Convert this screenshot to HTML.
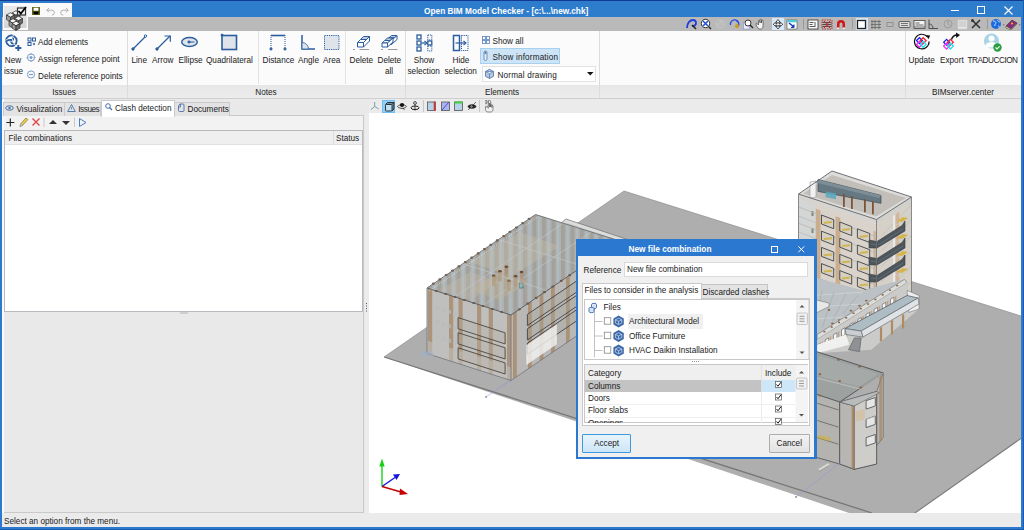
<!DOCTYPE html>
<html><head><meta charset="utf-8">
<style>
*{box-sizing:border-box;margin:0;padding:0}
html,body{width:1024px;height:530px;overflow:hidden}
body{position:relative;background:#2c7ad0;font-family:"Liberation Sans",sans-serif;font-size:8.2px;color:#1a1a1a}
.a{position:absolute}
.t{position:absolute;white-space:nowrap;line-height:13px}
.c{text-align:center}
svg{position:absolute;overflow:visible}
</style></head><body>
<!-- desktop strip -->
<div class="a" style="left:0;top:0;width:1024px;height:1.3px;background:#123a94"></div>
<!-- title bar -->
<div class="a" style="left:0;top:1.3px;width:1024px;height:16px;background:#2e7dcd"></div>
<div class="a" style="left:1023px;top:0;width:1px;height:530px;background:#1a5cae"></div>
<div class="a" style="left:0;top:529px;width:1024px;height:1px;background:#1a5cae"></div>
<div class="t" style="left:424px;top:4.8px;color:#fff;font-weight:bold;font-size:8.3px">Open BIM Model Checker - [c:\...\new.chk]</div>
<!-- window controls -->
<div class="a" style="left:951px;top:10px;width:8px;height:1px;background:#fff"></div>
<div class="a" style="left:977px;top:6px;width:8px;height:8px;border:1px solid #fff"></div>
<svg style="left:1004px;top:6px" width="9" height="9"><path d="M0.5 0.5L8.5 8.5M8.5 0.5L0.5 8.5" stroke="#fff" stroke-width="1.1"/></svg>
<!-- QAT -->
<div class="a" style="left:2px;top:17.2px;width:1019px;height:13.8px;background:#b9b9b9"></div>
<div class="a" style="left:3px;top:3px;width:25px;height:27px;background:#fafafa"></div>
<div class="a" style="left:4px;top:6px;width:22px;height:22px;background:#dcdcdc"></div>
<div class="a" style="left:28px;top:3px;width:44px;height:14px;background:#f9f9f9"></div>
<svg style="left:4px;top:6px" width="23" height="23">
<defs><linearGradient id="ab" x1="0" y1="0" x2="0" y2="1"><stop offset="0" stop-color="#ececec"/><stop offset="1" stop-color="#d2d2d2"/></linearGradient></defs>
<rect x="0.3" y="0.3" width="22.3" height="21.5" fill="url(#ab)"/>
<g stroke="#2a2a2a" stroke-width="0.7" stroke-linejoin="round"><path d="M12.00 4.70L15.98 7.00L12.00 9.30L8.02 7.00Z" fill="#f4f4f4"/><path d="M8.02 7.00L12.00 9.30L12.00 13.90L8.02 11.60Z" fill="#9c9c9c"/><path d="M15.98 7.00L12.00 9.30L12.00 13.90L15.98 11.60Z" fill="#6c6c6c"/><path d="M6.50 6.70L10.48 9.00L6.50 11.30L2.52 9.00Z" fill="#f4f4f4"/><path d="M2.52 9.00L6.50 11.30L6.50 15.90L2.52 13.60Z" fill="#9c9c9c"/><path d="M10.48 9.00L6.50 11.30L6.50 15.90L10.48 13.60Z" fill="#6c6c6c"/><path d="M14.50 10.20L18.48 12.50L14.50 14.80L10.52 12.50Z" fill="#f4f4f4"/><path d="M10.52 12.50L14.50 14.80L14.50 19.40L10.52 17.10Z" fill="#9c9c9c"/><path d="M18.48 12.50L14.50 14.80L14.50 19.40L18.48 17.10Z" fill="#6c6c6c"/><path d="M9.00 12.70L12.98 15.00L9.00 17.30L5.02 15.00Z" fill="#f4f4f4"/><path d="M5.02 15.00L9.00 17.30L9.00 21.90L5.02 19.60Z" fill="#9c9c9c"/><path d="M12.98 15.00L9.00 17.30L9.00 21.90L12.98 19.60Z" fill="#6c6c6c"/><path d="M12.00 15.20L15.98 17.50L12.00 19.80L8.02 17.50Z" fill="#f4f4f4"/><path d="M8.02 17.50L12.00 19.80L12.00 24.40L8.02 22.10Z" fill="#9c9c9c"/><path d="M15.98 17.50L12.00 19.80L12.00 24.40L15.98 22.10Z" fill="#6c6c6c"/></g>
<rect x="13.5" y="2" width="8" height="7" fill="#f3f3f3" stroke="#333" stroke-width="1.2"/>
<path d="M14.5 5l2.3 2.5L22 1" stroke="#000" stroke-width="1.8" fill="none"/>
</svg>
<svg style="left:32px;top:6.5px" width="8" height="8"><rect x="0" y="0" width="8" height="8" fill="#3b3b10"/><rect x="1.5" y="0.5" width="5" height="3.3" fill="#fff"/><rect x="2" y="5" width="4" height="3" fill="#000"/><rect x="0.3" y="0.3" width="7.4" height="7.4" fill="none" stroke="#7a7a20" stroke-width="0.6"/></svg>
<svg style="left:46px;top:6.5px" width="9" height="8"><path d="M0.8 3.2h5a2.5 2.5 0 0 1 0 5" fill="none" stroke="#b0b0b0" stroke-width="1"/><path d="M3 1L0.8 3.2 3 5.4" fill="none" stroke="#b0b0b0" stroke-width="1"/></svg>
<svg style="left:60px;top:6.5px" width="9" height="8"><path d="M8.2 3.2h-5a2.5 2.5 0 0 0 0 5" fill="none" stroke="#b0b0b0" stroke-width="1"/><path d="M6 1L8.2 3.2 6 5.4" fill="none" stroke="#b0b0b0" stroke-width="1"/></svg>


<!-- top toolbar icons -->
<div class="a" style="left:772px;top:18px;width:12px;height:12px;background:#d6e8f7"></div>
<div class="a" style="left:856px;top:18px;width:12px;height:12px;background:#d6e8f7"></div>
<div class="a" style="left:803px;top:19px;width:1px;height:10px;background:#999"></div>
<div class="a" style="left:852px;top:19px;width:1px;height:10px;background:#999"></div>
<div class="a" style="left:987px;top:19px;width:1px;height:10px;background:#999"></div>
<svg style="left:685px;top:18px" width="340" height="12">
<!-- 691 zoom window -->
<path d="M2 10c0-5 3-8 6-8 2 0 3 1 3 3 0 2-2 3-4 3" fill="none" stroke="#1f3fd8" stroke-width="1.8"/><path d="M7 7l4 4" stroke="#222" stroke-width="1.4"/>
<!-- 706 zoom extents -->
<circle cx="20.5" cy="5.5" r="4.2" fill="#fff" stroke="#222" stroke-width="0.9"/><path d="M18 3l5 5M23 3l-5 5" stroke="#1f50e0" stroke-width="1.6"/><path d="M23.5 8.5l2.5 2.5" stroke="#222" stroke-width="1.3"/>
<!-- 721 grey -->
<circle cx="35.5" cy="6" r="4.2" fill="none" stroke="#c8c8c8" stroke-width="1"/><path d="M33 8l3-5 1 5" stroke="#c8c8c8" fill="none"/>
<!-- 735 rotate -->
<path d="M45.5 7a4.2 4.2 0 1 1 7.5 1.5" fill="none" stroke="#1f50e0" stroke-width="1.4"/><circle cx="52" cy="8" r="2" fill="#c8a020"/><path d="M51 2l2.5 1-1.5 2" fill="#1f50e0"/>
<!-- 749 zoom -->
<rect x="58.5" y="4" width="6" height="7" fill="#e8eeff" stroke="#8090d0" stroke-width="0.6"/><circle cx="63" cy="5" r="3" fill="#fff" stroke="#222" stroke-width="0.9"/><path d="M65 7l3 3" stroke="#222" stroke-width="1.3"/>
<!-- 763 hand -->
<path d="M74 11c-2-2-3-4-3-5 0-1 1-1 1.5 0l1 1V3c0-1 1.5-1 1.5 0v2V2c0-1 1.5-1 1.5 0v3V3c0-1 1.5-1 1.5 0v5c0 2-1 3-2 3z" fill="#f4f4f4" stroke="#333" stroke-width="0.6"/>
<!-- 778 pan arrows -->
<path d="M93 1.5l2 2.5h-1.2v1.5h1.5V4.3L97.8 6.3 95.3 8.3V7h-1.5v1.5H95l-2 2.5-2-2.5h1.2V7h-1.5v1.3L88.2 6.3l2.5-2V5.5h1.5V4H91z" fill="#fff" stroke="#222" stroke-width="0.8"/>
<!-- 792 -->
<rect x="102" y="2" width="10" height="9" fill="#fff" stroke="#555" stroke-width="0.6"/><rect x="102" y="2" width="10" height="2.3" fill="#4fc8d8"/><path d="M104 5l5 4" stroke="#1040c0" stroke-width="1.6"/><path d="M109 6.5v3h-3" fill="#1040c0" stroke="#1040c0"/>
<!-- 813 -->
<rect x="123" y="2" width="10" height="9" fill="#f8f8f8" stroke="#333" stroke-width="0.8"/><path d="M124.5 4.5h4M124.5 6.5h3M124.5 8.5h6M130 4v4" stroke="#333" stroke-width="0.8"/>
<!-- 827 red dashed -->
<rect x="137" y="2" width="10" height="9" fill="none" stroke="#c02020" stroke-width="0.9" stroke-dasharray="1.5 1"/><path d="M137.5 4.5h9M137.5 6.5h9M137.5 8.5h9" stroke="#333" stroke-width="0.8"/><path d="M139 3l6 7M145 3l-6 7" stroke="#d02020" stroke-width="1"/>
<!-- 841 magnet -->
<path d="M152 11V6a4 4 0 0 1 8 0v5h-2.5V6a1.5 1.5 0 0 0-3 0v5z" fill="#d01818"/><rect x="152" y="9.5" width="2.5" height="1.5" fill="#eee"/><rect x="157.5" y="9.5" width="2.5" height="1.5" fill="#eee"/>
<!-- 862 square -->
<rect x="172.5" y="2.5" width="8" height="8" fill="#fff" stroke="#222" stroke-width="1.3"/>
<!-- 876 grid -->
<path d="M187 2v9M190 2v9M194 2v9M186 3.5h10M186 6.5h10M186 9.5h10" stroke="#666" stroke-width="0.8"/>
<!-- 890 dotted -->
<rect x="202" y="4.5" width="6" height="4" fill="none" stroke="#888" stroke-width="0.8"/><path d="M201 2h1M208 2h1M201 11h1M208 11h1" stroke="#aaa"/>
<!-- 904.7 -->
<rect x="214" y="3.5" width="11" height="6" rx="1" fill="#ddd" stroke="#444" stroke-width="0.8"/><path d="M216 5.5h7M216 7.5h7" stroke="#444" stroke-width="0.7"/>
<!-- 919 -->
<rect x="229" y="2.5" width="11" height="8" fill="#f4f4f4" stroke="#444" stroke-width="0.8"/><path d="M230.5 5h4M230.5 7h8M229 9h11" stroke="#444" stroke-width="0.8"/>
<!-- 933 angle -->
<path d="M244 1.5v9h9M244 6a4 4 0 0 1 4 4.5" fill="none" stroke="#444" stroke-width="0.9"/>
<!-- 948 circle -->
<circle cx="263" cy="6" r="4" fill="none" stroke="#999" stroke-width="0.9"/><path d="M263 2.5v3.5l2 2" stroke="#999" fill="none"/>
<!-- 962 -->
<rect x="273" y="2" width="9" height="9" fill="#e8e8e8" stroke="#ccc" stroke-width="0.8"/><path d="M274 4h7M274 6h7M274 8h7" stroke="#bbb"/>
<!-- 977 tools -->
<path d="M287 2l8 8M295 2l-8 8" stroke="#333" stroke-width="1.6"/><circle cx="287.5" cy="2.5" r="1.5" fill="#333"/>
<!-- 996 globe -->
<circle cx="311" cy="6" r="5" fill="#1d6be0"/><path d="M308 3c2 0 3 1 3 2s-2 1-1 3M312 2c1 1 2 2 3 2M313 8c1 0 2 1 1 2" stroke="#c8e6ff" stroke-width="1" fill="none"/><path d="M318 6.5l1.5 0-0.75 1z" fill="#333"/>
<!-- 1011 book -->
<path d="M321 8l6-6 5 3-6 6z" fill="#8a2a80" stroke="#333" stroke-width="0.6"/><path d="M321 8v2l5 2 6-6v-1l-6 6z" fill="#f0e0b0" stroke="#333" stroke-width="0.5"/><circle cx="327" cy="5.5" r="1" fill="#ffc000"/><path d="M334 6.5l1.5 0-0.75 1z" fill="#333"/>
</svg>

<!-- ribbon -->
<div class="a" style="left:2px;top:31px;width:1019px;height:67px;background:#fbfbfb"></div>
<div class="a" style="left:2px;top:84.5px;width:1019px;height:13.5px;background:linear-gradient(#e7e7e7,#ececec)"></div>
<div class="a" style="left:2px;top:97.8px;width:1019px;height:1px;background:#cfcfcf"></div>
<div class="a" style="left:127px;top:31px;width:1px;height:67px;background:#dcdcdc"></div>
<div class="a" style="left:258px;top:31px;width:1px;height:53px;background:#e3e3e3"></div>
<div class="a" style="left:345px;top:31px;width:1px;height:53px;background:#e3e3e3"></div>
<div class="a" style="left:405px;top:31px;width:1px;height:67px;background:#dcdcdc"></div>
<div class="a" style="left:599px;top:31px;width:1px;height:67px;background:#dcdcdc"></div>
<div class="a" style="left:905px;top:31px;width:1px;height:67px;background:#dcdcdc"></div>


<div class="a" style="left:479.5px;top:48px;width:80px;height:15.5px;background:#cde4f7;border:1px solid #a8d0f0"></div>
<div class="a" style="left:481.5px;top:66px;width:114px;height:16px;background:#fff;border:1px solid #e2e2e2"></div>
<!-- ribbon icons -->
<svg style="left:0;top:0" width="1024" height="100">
<g fill="none" stroke="#2a5d9f">
<!-- new issue -->
<path d="M6.10 40.80A5.3 5.3 0 0 1 13.64 36.00Q13.65 39.50 12.09 41.20" stroke="#fbfbfb" stroke-width="3.2" stroke-linecap="round"/><path d="M6.10 40.80A5.3 5.3 0 0 1 13.64 36.00Q13.65 39.50 12.09 41.20" stroke-width="1.8" stroke-linecap="round"/><path d="M14.05 36.21A5.3 5.3 0 0 1 14.44 45.14Q11.40 43.40 10.71 41.20" stroke="#fbfbfb" stroke-width="3.2" stroke-linecap="round"/><path d="M14.05 36.21A5.3 5.3 0 0 1 14.44 45.14Q11.40 43.40 10.71 41.20" stroke-width="1.8" stroke-linecap="round"/><path d="M14.05 45.39A5.3 5.3 0 0 1 6.12 41.26Q9.15 39.50 11.40 40.00" stroke="#fbfbfb" stroke-width="3.2" stroke-linecap="round"/><path d="M14.05 45.39A5.3 5.3 0 0 1 6.12 41.26Q9.15 39.50 11.40 40.00" stroke-width="1.8" stroke-linecap="round"/>
<path d="M18.3 45v6M15.3 48h6" stroke-width="1.9"/>
<!-- add elements -->
<rect x="28" y="38" width="3" height="3" stroke-width="1"/><rect x="32.5" y="38" width="3" height="3" stroke-width="1"/><rect x="28" y="42.5" width="3" height="3" stroke-width="1"/><circle cx="34" cy="44" r="1.2" fill="#5a80b8" stroke="none"/>
<!-- assign ref point -->
<circle cx="31" cy="57.5" r="3.6" stroke="#7a9ccc" stroke-width="1"/><circle cx="31" cy="57.5" r="1.5" fill="#7a9ccc" stroke="none"/><path d="M31 53v2M31 60v2M26.5 57.5h2M33.5 57.5h2" stroke="#7a9ccc" stroke-width="0.8"/>
<!-- delete ref -->
<circle cx="31" cy="74.5" r="3.6" stroke="#7a9ccc" stroke-width="1"/><path d="M29 74.5h4" stroke="#7a9ccc" stroke-width="1.2"/>
<!-- line -->
<path d="M133 49L145.5 36.5" stroke-width="1.3"/><circle cx="133" cy="49" r="1.2" fill="#2a5d9f"/><circle cx="145.5" cy="36" r="1.2" fill="#fff" stroke-width="1"/>
<!-- arrow -->
<path d="M157 49L170 36" stroke-width="1.3"/><path d="M164.5 36h5.8v5.8" stroke-width="1.2"/><circle cx="157" cy="49" r="1.2" fill="#2a5d9f"/>
<!-- ellipse -->
<ellipse cx="189.5" cy="42" rx="7.8" ry="4.5" fill="#dfe3ea" stroke-width="1.4"/><path d="M189 42h5.5" stroke-width="1"/><circle cx="189" cy="42" r="1.1" fill="#2a5d9f"/>
<!-- quadrilateral -->
<rect x="222" y="35.5" width="14.5" height="14" fill="#dfe3ea" stroke-width="1.6"/><circle cx="222" cy="35" r="1" fill="#2a5d9f"/>
<!-- distance -->
<path d="M271 35.5h14" stroke-width="1.6"/><path d="M271 35v13.5M285 35v13.5" stroke-width="1" stroke-dasharray="1 1"/><circle cx="271" cy="49" r="1.1" fill="#2a5d9f"/><circle cx="285" cy="49" r="1.1" fill="#2a5d9f"/>
<!-- angle -->
<path d="M302 35v14h13" stroke-width="1.5"/><path d="M302 42.5a6.5 6.5 0 0 1 6.5 6.5H302z" fill="#dfe3ea" stroke-width="0.8"/>
<!-- area -->
<rect x="324.5" y="35.5" width="14.5" height="14" fill="#dfe3ea" stroke-width="1" stroke-dasharray="1.2 1"/>
<!-- eraser -->
<path d="M360.50 39.50L363.50 36.50L369.50 36.50L366.50 39.50Z" fill="#c3ccd8" stroke-width="1"/><path d="M357.50 42.50L360.50 39.50L366.50 39.50L363.50 42.50Z" fill="#fff" stroke-width="1"/><path d="M363.50 42.50L369.50 36.50L369.50 41.00L363.50 47.00Z" fill="#fff" stroke-width="1"/><path d="M357.50 42.50L363.50 42.50L363.50 47.00L357.50 47.00Z" fill="#fff" stroke-width="1"/>
<path d="M353 49.5h2M359.5 49.5h9.5" stroke="#9a9a9a" stroke-width="1.1"/>
<!-- delete all -->
<path d="M388.75 38.00L391.50 35.50L397.00 35.50L394.25 38.00Z" fill="#c3ccd8" stroke-width="1"/><path d="M386.00 40.50L388.75 38.00L394.25 38.00L391.50 40.50Z" fill="#fff" stroke-width="1"/><path d="M391.50 40.50L397.00 35.50L397.00 39.50L391.50 44.50Z" fill="#fff" stroke-width="1"/><path d="M386.00 40.50L391.50 40.50L391.50 44.50L386.00 44.50Z" fill="#fff" stroke-width="1"/><path d="M384.75 40.50L387.50 38.00L393.00 38.00L390.25 40.50Z" fill="#c3ccd8" stroke-width="1"/><path d="M382.00 43.00L384.75 40.50L390.25 40.50L387.50 43.00Z" fill="#fff" stroke-width="1"/><path d="M387.50 43.00L393.00 38.00L393.00 42.00L387.50 47.00Z" fill="#fff" stroke-width="1"/><path d="M382.00 43.00L387.50 43.00L387.50 47.00L382.00 47.00Z" fill="#fff" stroke-width="1"/>
<path d="M381 49.5h2M388 49.5h9.5" stroke="#9a9a9a" stroke-width="1.1"/>
<!-- show selection -->
<rect x="417" y="35" width="4" height="4" stroke-width="1.3"/><rect x="417" y="41" width="4" height="4" stroke-width="1.3"/><rect x="417" y="47" width="4" height="4" stroke-width="1.3"/>
<rect x="427.8" y="35" width="4" height="5" stroke-width="1" stroke-dasharray="1.2 0.9"/><rect x="427.8" y="46" width="4" height="5" stroke-width="1" stroke-dasharray="1.2 0.9"/>
<rect x="427.8" y="41" width="4" height="4" stroke-width="1.3"/>
<path d="M421.5 43h4" stroke-width="1.3"/><path d="M424.5 41l2.5 2-2.5 2" stroke-width="1.1"/>
<!-- hide selection -->
<rect x="453.5" y="35.5" width="6" height="15" stroke-width="1.5"/><rect x="461.5" y="35.5" width="6.5" height="15" stroke-width="1" stroke-dasharray="1.2 0.9"/>
<path d="M455.5 43h10" stroke-width="1.2"/><path d="M463.5 41l2.5 2-2.5 2" stroke-width="1.1"/>
<!-- show all -->
<rect x="482.5" y="36.5" width="3" height="3" stroke="#6a8cc0" stroke-width="0.9"/><rect x="486.5" y="36.5" width="3" height="3" stroke="#6a8cc0" stroke-width="0.9"/><rect x="482.5" y="40.5" width="3" height="3" stroke="#6a8cc0" stroke-width="0.9"/><rect x="486.5" y="40.5" width="3" height="3" stroke="#6a8cc0" stroke-width="0.9"/>
<!-- show info -->
<rect x="484" y="51" width="3" height="9.5" rx="1.5" fill="#e3ecf7" stroke="#5a7cb0" stroke-width="0.8"/><rect x="484.6" y="51.5" width="1.8" height="2.5" fill="#5a7cb0" stroke="none"/>
<!-- normal drawing cube -->
<path d="M485.5 71.5l4-2.2 4 2.2v4.8l-4 2.2-4-2.2z" fill="#b8c8dc" stroke="#5a7cb0" stroke-width="0.9"/><path d="M485.5 71.5l4 2.2 4-2.2z" fill="#e8eef6" stroke="#5a7cb0" stroke-width="0.7"/><path d="M489.5 73.7v4.8" stroke="#5a7cb0" stroke-width="0.8"/>
</g>
<!-- update -->
<path d="M927.5 37a7.3 7.3 0 1 0 1.6 4.5" fill="none" stroke="#111" stroke-width="1.2"/><path d="M926 35l4.2 0.6-1.8 3.6z" fill="#111"/>
<g stroke-width="1.3" fill="none"><path d="M919.40 37.70L922.30 40.60L919.40 43.50L916.50 40.60Z" stroke="#2020f0"/><path d="M923.20 37.70L926.10 40.60L923.20 43.50L920.30 40.60Z" stroke="#f02030"/><path d="M919.40 41.50L922.30 44.40L919.40 47.30L916.50 44.40Z" stroke="#f030f0"/><path d="M923.20 41.50L926.10 44.40L923.20 47.30L920.30 44.40Z" stroke="#20e0e8"/></g>
<!-- export -->
<g stroke-width="1.3" fill="none"><path d="M946.60 39.40L949.50 42.30L946.60 45.20L943.70 42.30Z" stroke="#2020f0"/><path d="M950.40 39.40L953.30 42.30L950.40 45.20L947.50 42.30Z" stroke="#f02030"/><path d="M946.60 43.20L949.50 46.10L946.60 49.00L943.70 46.10Z" stroke="#f030f0"/><path d="M950.40 43.20L953.30 46.10L950.40 49.00L947.50 46.10Z" stroke="#20e0e8"/></g>
<path d="M951.5 39.5c1-3 3-4.5 5.5-4.5" fill="none" stroke="#111" stroke-width="1.4"/><path d="M956 32.5l4 2.6-3.8 2.8z" fill="#111"/>
<!-- traduccion -->
<circle cx="991.5" cy="41" r="7.6" fill="#a8d4e6"/><circle cx="991.5" cy="38.5" r="3" fill="#fff"/><path d="M985.5 46a6 4 0 0 1 12 0v1.5h-12z" fill="#fff"/><circle cx="997.5" cy="47.5" r="4.2" fill="#2aa040"/><path d="M995.5 47.5l1.5 1.5 2.6-2.6" fill="none" stroke="#fff" stroke-width="1.1"/>
</svg>

<!-- ribbon labels -->
<div class="t c" style="left:4px;top:54px;width:18px">New</div>
<div class="t c" style="left:4px;top:65px;width:18px">issue</div>
<div class="t" style="left:38px;top:36px">Add elements</div>
<div class="t" style="left:38px;top:53px">Assign reference point</div>
<div class="t" style="left:38px;top:70px">Delete reference points</div>
<div class="t c" style="left:34px;top:86px;width:60px">Issues</div>

<div class="t" style="left:131.5px;top:54px">Line</div>
<div class="t" style="left:152px;top:54px">Arrow</div>
<div class="t" style="left:178.5px;top:54px">Ellipse</div>
<div class="t" style="left:206px;top:54px">Quadrilateral</div>
<div class="t" style="left:262.5px;top:54px">Distance</div>
<div class="t" style="left:298px;top:54px">Angle</div>
<div class="t" style="left:323px;top:54px">Area</div>
<div class="t" style="left:349.5px;top:54px">Delete</div>
<div class="t" style="left:377.5px;top:54px">Delete</div>
<div class="t c" style="left:379px;top:65px;width:20px">all</div>
<div class="t c" style="left:236px;top:86px;width:60px">Notes</div>

<div class="t c" style="left:404px;top:54px;width:40px">Show</div>
<div class="t" style="left:407.5px;top:65px">selection</div>
<div class="t c" style="left:441px;top:54px;width:40px">Hide</div>
<div class="t" style="left:444.5px;top:65px">selection</div>
<div class="t" style="left:492.5px;top:35px">Show all</div>
<div class="t" style="left:492.5px;top:50.5px;letter-spacing:0.15px">Show information</div>
<div class="t" style="left:497.5px;top:69px;letter-spacing:0.15px">Normal drawing</div>
<svg style="left:587px;top:72px" width="7" height="4"><path d="M0 0H6.5L3.25 3.5Z" fill="#111"/></svg>
<div class="t c" style="left:472px;top:86px;width:60px">Elements</div>

<div class="t" style="left:908.5px;top:54px">Update</div>
<div class="t" style="left:940px;top:54px">Export</div>
<div class="t" style="left:967.5px;top:54px;letter-spacing:-0.45px">TRADUCCION</div>
<div class="t c" style="left:923px;top:86px;width:80px">BIMserver.center</div>

<!-- below ribbon band -->
<div class="a" style="left:2px;top:98.6px;width:1019px;height:14.4px;background:#ebebeb"></div>
<!-- left panel -->
<div class="a" style="left:2px;top:98.6px;width:367px;height:414.4px;background:#e9e9e9"></div>
<div class="a" style="left:2.4px;top:98.6px;width:1.2px;height:414.4px;background:#fafafa"></div>
<div class="a" style="left:3.6px;top:114.5px;width:360.9px;height:398px;background:#e9e9e9;border:1px solid #c9c9c9;border-left:none"></div>
<div class="a" style="left:3.6px;top:115.5px;width:359.9px;height:14px;background:#f2f2f2"></div>
<!-- tabs -->
<div class="a" style="left:3px;top:102px;width:61.5px;height:13.5px;background:#e3e3e3;border:1px solid #cacaca;border-bottom:none"></div>
<div class="a" style="left:64.5px;top:102px;width:36.5px;height:13.5px;background:#e3e3e3;border:1px solid #cacaca;border-bottom:none;border-left:none"></div>
<div class="a" style="left:101px;top:100px;width:73.5px;height:16.5px;background:#fff;border:1px solid #cacaca;border-bottom:none"></div>
<div class="a" style="left:174.5px;top:102px;width:55px;height:13.5px;background:#e3e3e3;border:1px solid #cacaca;border-bottom:none;border-left:none"></div>
<div class="t" style="left:16.5px;top:102.8px">Visualization</div>
<div class="t" style="left:78.3px;top:102.8px;letter-spacing:-0.45px">Issues</div>
<div class="t" style="left:115px;top:101.8px">Clash detection</div>
<div class="t" style="left:187.5px;top:102.8px">Documents</div>
<svg style="left:0;top:98px" width="240" height="34">
<ellipse cx="9.5" cy="10" rx="3.8" ry="2.2" fill="none" stroke="#4a6ea8" stroke-width="1"/><circle cx="9.5" cy="10" r="1.2" fill="#4a6ea8"/>
<path d="M71.5 6.5l3.8 7h-7.6z" fill="none" stroke="#4a6ea8" stroke-width="0.9"/><path d="M71.5 9v2.5" stroke="#4a6ea8" stroke-width="0.7"/>
<circle cx="108" cy="8" r="2.3" fill="none" stroke="#4a6ea8" stroke-width="1"/><path d="M109.5 9.5l2.5 2.5" stroke="#4a6ea8" stroke-width="1.3"/>
<path d="M178.5 8v4.5a1 1 0 0 0 1 1h3.5a1 1 0 0 0 1-1V7a1 1 0 0 0-1-1H180z" fill="none" stroke="#4a6ea8" stroke-width="0.9"/><path d="M180.5 6v3h-2" fill="none" stroke="#4a6ea8" stroke-width="0.8"/>
<!-- toolbar -->
<path d="M10.3 20.5v8M6.3 24.5h8" stroke="#222" stroke-width="1.1"/>
<path d="M20 28.5l1-3 5-5.5 1.8 1.6-5 5.5z" fill="#f2d04a" stroke="#6a5a20" stroke-width="0.6"/><path d="M20 28.5l1-3 1.8 1.6z" fill="#ddd" stroke="#777" stroke-width="0.4"/>
<path d="M32.5 20.5l7 7M39.5 20.5l-7 7" stroke="#e04848" stroke-width="1.4"/>
<path d="M44 19.5v9.5" stroke="#c9c9c9" stroke-width="1"/>
<path d="M49 26h8l-4-4z" fill="#333"/>
<path d="M62 23h8l-4 4z" fill="#333"/>
<path d="M74.5 19.5v9.5" stroke="#c9c9c9" stroke-width="1"/>
<path d="M79.5 20.5l6.5 4-6.5 4z" fill="none" stroke="#4a7cc8" stroke-width="1"/>
</svg>
<!-- table -->
<div class="a" style="left:4px;top:129.5px;width:359px;height:182px;background:#fff;border:1px solid #b9b9bf"></div>
<div class="a" style="left:5px;top:130.5px;width:357px;height:14px;background:#efefef;border-bottom:1px solid #e1e1e1"></div>
<div class="a" style="left:332.5px;top:131px;width:1px;height:13px;background:#dcdcdc"></div>
<div class="t" style="left:8.5px;top:131.5px">File combinations</div>
<div class="t" style="left:336px;top:131.5px">Status</div>
<svg style="left:180px;top:312px" width="8" height="3"><path d="M0.5 1h1M2.5 1h1M4.5 1h1M6.5 1h1" stroke="#777" stroke-width="0.9"/></svg>
<!-- splitter -->
<div class="a" style="left:364.5px;top:113px;width:4.5px;height:400px;background:#ececec"></div>
<svg style="left:365px;top:302px" width="4" height="10"><path d="M1.5 1v1M1.5 3.5v1M1.5 6v1M1.5 8.5v1" stroke="#555" stroke-width="1"/></svg>
<!-- view toolbar -->
<div class="a" style="left:382px;top:99.8px;width:13.3px;height:13px;background:#92cff8;border:1px solid #70bdf0"></div>
<svg style="left:366px;top:98px" width="140" height="16">
<path d="M8.7 8.5v-4.5M8.7 8.5l-3.8 3M8.7 8.5l4 2.5" stroke="#6b96a8" stroke-width="0.9" fill="none"/>
<path d="M19.5 6.5l2-2h6.5v6.5l-2 2" fill="#6a8fa8" stroke="#222" stroke-width="0.9"/><rect x="19.5" y="6.5" width="6.5" height="6.5" rx="0.8" fill="#bfe0f2" stroke="#222" stroke-width="0.9"/><path d="M26 6.5l2-2" stroke="#222" stroke-width="0.8"/>
<path d="M31.5 8.5c2-2.5 7-2.5 9 0-2 2.5-7 2.5-9 0z" fill="none" stroke="#333" stroke-width="0.9"/><circle cx="36" cy="7" r="2.1" fill="#111"/><path d="M37 10l1.5 2" stroke="#333" stroke-width="0.8"/>
<ellipse cx="49" cy="9.8" rx="4" ry="1.8" fill="none" stroke="#222" stroke-width="1"/><circle cx="49" cy="5" r="1.4" fill="none" stroke="#222" stroke-width="0.8"/><path d="M49 6.5v6" stroke="#222" stroke-width="0.8"/>
<path d="M57.5 2v12" stroke="#c8c8c8"/>
<rect x="61.5" y="4" width="8" height="8.5" fill="#b5d3e8" stroke="#555" stroke-width="0.8"/><path d="M68.5 3.5v9.5" stroke="#e03030" stroke-width="1.6"/>
<rect x="75.5" y="4" width="8" height="8.5" fill="#a9b4f0" stroke="#555" stroke-width="0.8"/><path d="M76 12l7-8" stroke="#5040c0" stroke-width="0.9"/>
<rect x="88.5" y="4" width="8" height="8.5" fill="#b5d3e8" stroke="#555" stroke-width="0.8"/><rect x="88.5" y="3.5" width="8" height="2" fill="#40d040"/>
<path d="M101.5 8.5c2-3 7-3 9 0-2 3-7 3-9 0z" fill="#222"/><circle cx="105.5" cy="8.5" r="1" fill="#fff"/><path d="M102 12l8-8" stroke="#222" stroke-width="0.6"/>
<path d="M113.5 2v12" stroke="#c8c8c8"/>
<path d="M119.5 8.5v3c0 1.5 1 2.5 2.5 2.5h2.5c1.5 0 2.5-1 2.5-2.5V8c0-0.8-1.2-0.8-1.2 0v1.5V6.5c0-0.8-1.2-0.8-1.2 0V9V6c0-0.8-1.2-0.8-1.2 0v3V6.8c0-0.8-1.2-0.8-1.2 0v3.5l-0.5-1.5c-0.3-0.8-1.2-0.5-1.2 0.2z" fill="#f0f0f0" stroke="#444" stroke-width="0.6"/><path d="M119 2.5h1.5a0.8 0.8 0 0 1 0 1.6h-1 1a0.8 0.8 0 0 1 0 1.6H119M122.5 2.5v3.2h0.8a1.6 1.6 0 0 0 0-3.2z" fill="none" stroke="#444" stroke-width="0.6"/>
</svg>
<!-- viewport -->
<div class="a" style="left:369px;top:113px;width:652px;height:400px;background:#fff;overflow:hidden" id="vp">
<svg style="left:0;top:0" width="652" height="400" viewBox="369 113 652 400">
<path d="M384.0 357.0L624.0 191.0L1040.0 322.0L1040.0 425.0L905.0 520.0L870.0 520.0z" fill="#aeaeae"/>
<path d="M384.0 357.0L872.0 513.0" fill="none" stroke="#777" stroke-width="1.3"/>
<path d="M1040.0 425.0L905.0 520.0" fill="none" stroke="#7a7a7a" stroke-width="1.1"/>
<path d="M384.0 357.0L624.0 191.0L1040.0 322.0" fill="none" stroke="#8f8f8f" stroke-width="0.7"/>
<path d="M511.0 380.0L486.0 397.0" fill="none" stroke="#8a8ae0" stroke-width="0.5"/>
<path d="M511.0 380.0L620.0 306.5" fill="none" stroke="#9a9ae0" stroke-width="0.6"/>
<circle cx="486" cy="397" r="0.8" fill="#555"/>
<defs><pattern id="stA" patternUnits="userSpaceOnUse" width="9.5" height="10" x="0.5"><rect x="0" y="0" width="4" height="10" fill="#9a7a58" fill-opacity="0.3"/><rect x="5.5" y="0" width="2" height="10" fill="#dde4e7" fill-opacity="0.18"/></pattern><pattern id="stB" patternUnits="userSpaceOnUse" width="10" height="10" x="2"><rect x="0" y="0" width="3.2" height="10" fill="#a07850" fill-opacity="0.6"/></pattern><pattern id="stT" patternUnits="userSpaceOnUse" width="10" height="10" x="4"><rect x="0" y="0" width="3.2" height="10" fill="#a88058" fill-opacity="0.6"/></pattern></defs>
<path d="M543.0 238.0L566.0 219.0L650.0 247.0L627.0 266.0z" fill="#dcdcda" stroke="#6e7174" stroke-width="0.7"/>
<path d="M549.0 237.0L567.0 223.0L642.0 248.0L625.0 262.0z" fill="#c3c5c5"/>
<path d="M543.0 238.0L627.0 266.0L627.0 272.0L543.0 244.0z" fill="#b8b6b2" stroke="#777" stroke-width="0.6"/>
<path d="M427.0 288.0L535.5 214.5L620.0 241.0L620.0 306.5L511.0 380.5L427.0 353.5z" fill="#c5c6c5"/>
<path d="M427.0 288.0L535.5 214.5L620.0 241.0L511.0 315.0z" fill="#aab2b5"/>
<path d="M427.0 288.0L535.5 214.5L620.0 241.0L511.0 315.0z" fill="url(#stA)"/>
<path d="M470.0 262.0L520.0 232.0L560.0 246.0L512.0 276.0z" fill="#c9c0b0" fill-opacity="0.35"/>
<path d="M440.0 290.0L470.0 272.0L500.0 282.0L470.0 300.0z" fill="#c8beb0" fill-opacity="0.35"/>
<path d="M462.8 263.7L547.0 290.6" fill="none" stroke="#c6cacc" stroke-width="0.6"/>
<path d="M454.7 296.9L563.4 223.2" fill="none" stroke="#c6cacc" stroke-width="0.6"/>
<path d="M498.6 239.5L582.9 266.2" fill="none" stroke="#c6cacc" stroke-width="0.6"/>
<path d="M482.4 305.8L591.3 232.0" fill="none" stroke="#c6cacc" stroke-width="0.6"/>
<path d="M427.0 288.0L511.0 315.0L511.0 380.5L427.0 353.5z" fill="#bfbfbe"/>
<path d="M428.0 288.3L432.2 289.7L432.2 355.2L428.0 353.8z" fill="#a07850" fill-opacity="0.6"/>
<path d="M449.0 295.1L453.2 296.4L453.2 361.9L449.0 360.6z" fill="#a07850" fill-opacity="0.6"/>
<path d="M458.5 298.1L462.7 299.5L462.7 365.0L458.5 363.6z" fill="#a07850" fill-opacity="0.6"/>
<path d="M477.0 304.1L481.2 305.4L481.2 370.9L477.0 369.6z" fill="#a07850" fill-opacity="0.6"/>
<path d="M488.7 307.8L492.9 309.2L492.9 374.7L488.7 373.3z" fill="#a07850" fill-opacity="0.6"/>
<path d="M507.0 313.7L511.2 315.1L511.2 380.6L507.0 379.2z" fill="#a07850" fill-opacity="0.6"/>
<path d="M511.0 315.0L620.0 241.0L620.0 306.5L511.0 380.5z" fill="#b9b8b6"/>
<path d="M513.0 313.6L516.8 311.1L516.8 376.6L513.0 379.1z" fill="#a07850" fill-opacity="0.6"/>
<path d="M528.0 303.5L531.8 300.9L531.8 366.4L528.0 369.0z" fill="#a07850" fill-opacity="0.6"/>
<path d="M539.6 295.6L543.4 293.0L543.4 358.5L539.6 361.1z" fill="#a07850" fill-opacity="0.6"/>
<path d="M551.0 287.8L554.8 285.3L554.8 350.8L551.0 353.3z" fill="#a07850" fill-opacity="0.6"/>
<path d="M566.0 277.7L569.8 275.1L569.8 340.6L566.0 343.2z" fill="#a07850" fill-opacity="0.6"/>
<path d="M590.0 261.4L593.8 258.8L593.8 324.3L590.0 326.9z" fill="#a07850" fill-opacity="0.6"/>
<path d="M605.0 251.2L608.8 248.6L608.8 314.1L605.0 316.7z" fill="#a07850" fill-opacity="0.6"/>
<path d="M427.0 340.4L511.0 367.4L511.0 380.5L427.0 353.5z" fill="#c2c0bd" fill-opacity="0.6"/>
<circle cx="437.4" cy="308.1" r="2.2" fill="#b8bcbe" fill-opacity="0.7"/>
<circle cx="437.4" cy="322.5" r="2.2" fill="#b8bcbe" fill-opacity="0.7"/>
<circle cx="437.4" cy="336.9" r="2.2" fill="#b8bcbe" fill-opacity="0.7"/>
<circle cx="443.3" cy="310.0" r="2.2" fill="#b8bcbe" fill-opacity="0.7"/>
<circle cx="443.3" cy="324.4" r="2.2" fill="#b8bcbe" fill-opacity="0.7"/>
<circle cx="443.3" cy="338.8" r="2.2" fill="#b8bcbe" fill-opacity="0.7"/>
<circle cx="449.2" cy="311.9" r="2.2" fill="#b8bcbe" fill-opacity="0.7"/>
<circle cx="449.2" cy="326.3" r="2.2" fill="#b8bcbe" fill-opacity="0.7"/>
<circle cx="449.2" cy="340.7" r="2.2" fill="#b8bcbe" fill-opacity="0.7"/>
<circle cx="455.0" cy="313.8" r="2.2" fill="#b8bcbe" fill-opacity="0.7"/>
<circle cx="455.0" cy="328.2" r="2.2" fill="#b8bcbe" fill-opacity="0.7"/>
<circle cx="455.0" cy="342.6" r="2.2" fill="#b8bcbe" fill-opacity="0.7"/>
<path d="M458.1 317.6L505.1 332.8L505.1 343.9L458.1 328.8z" fill="#b5aea4" fill-opacity="0.35" stroke="#4d463c" stroke-width="0.9"/>
<path d="M458.1 332.7L505.1 347.8L505.1 359.0L458.1 343.8z" fill="#b5aea4" fill-opacity="0.35" stroke="#4d463c" stroke-width="0.9"/>
<path d="M458.1 347.8L505.1 362.9L505.1 374.0L458.1 358.9z" fill="#b5aea4" fill-opacity="0.35" stroke="#4d463c" stroke-width="0.9"/>
<path d="M527.4 314.4L617.8 253.0L617.8 264.1L527.4 325.5z" fill="#aaa49c" fill-opacity="0.35" stroke="#3f4144" stroke-width="0.9"/>
<path d="M527.4 328.8L617.8 267.4L617.8 278.5L527.4 339.9z" fill="#aaa49c" fill-opacity="0.35" stroke="#3f4144" stroke-width="0.9"/>
<path d="M527.4 343.2L617.8 281.8L617.8 292.9L527.4 354.3z" fill="#aaa49c" fill-opacity="0.35" stroke="#3f4144" stroke-width="0.9"/>
<path d="M526.3 345.2L556.8 324.5L556.8 344.2L526.3 364.9z" fill="#f4f4f4" fill-opacity="0.8"/>
<path d="M592.8 311.9L609.1 300.8L609.1 310.6L592.8 321.7z" fill="#a9b4c8" fill-opacity="0.5"/>
<path d="M592.8 266.1L600.4 260.9L600.4 293.6L592.8 298.8z" fill="#9fa0d8" fill-opacity="0.5"/>
<ellipse cx="433.4" cy="283.7" rx="1.5" ry="1.1" fill="#735236"/>
<ellipse cx="439.8" cy="279.4" rx="1.5" ry="1.1" fill="#735236"/>
<ellipse cx="446.1" cy="275.0" rx="1.5" ry="1.1" fill="#735236"/>
<ellipse cx="452.5" cy="270.7" rx="1.5" ry="1.1" fill="#735236"/>
<ellipse cx="458.9" cy="266.4" rx="1.5" ry="1.1" fill="#735236"/>
<ellipse cx="465.3" cy="262.1" rx="1.5" ry="1.1" fill="#735236"/>
<ellipse cx="471.7" cy="257.7" rx="1.5" ry="1.1" fill="#735236"/>
<ellipse cx="478.1" cy="253.4" rx="1.5" ry="1.1" fill="#735236"/>
<ellipse cx="484.4" cy="249.1" rx="1.5" ry="1.1" fill="#735236"/>
<ellipse cx="490.8" cy="244.8" rx="1.5" ry="1.1" fill="#735236"/>
<ellipse cx="497.2" cy="240.4" rx="1.5" ry="1.1" fill="#735236"/>
<ellipse cx="503.6" cy="236.1" rx="1.5" ry="1.1" fill="#735236"/>
<ellipse cx="510.0" cy="231.8" rx="1.5" ry="1.1" fill="#735236"/>
<ellipse cx="516.4" cy="227.5" rx="1.5" ry="1.1" fill="#735236"/>
<ellipse cx="522.7" cy="223.1" rx="1.5" ry="1.1" fill="#735236"/>
<ellipse cx="529.1" cy="218.8" rx="1.5" ry="1.1" fill="#735236"/>
<ellipse cx="436.3" cy="291.0" rx="1.5" ry="1.1" fill="#735236"/>
<ellipse cx="445.7" cy="294.0" rx="1.5" ry="1.1" fill="#735236"/>
<ellipse cx="455.0" cy="297.0" rx="1.5" ry="1.1" fill="#735236"/>
<ellipse cx="464.3" cy="300.0" rx="1.5" ry="1.1" fill="#735236"/>
<ellipse cx="473.7" cy="303.0" rx="1.5" ry="1.1" fill="#735236"/>
<ellipse cx="483.0" cy="306.0" rx="1.5" ry="1.1" fill="#735236"/>
<ellipse cx="492.3" cy="309.0" rx="1.5" ry="1.1" fill="#735236"/>
<ellipse cx="501.7" cy="312.0" rx="1.5" ry="1.1" fill="#735236"/>
<ellipse cx="519.4" cy="309.3" rx="1.5" ry="1.1" fill="#735236"/>
<ellipse cx="527.8" cy="303.6" rx="1.5" ry="1.1" fill="#735236"/>
<ellipse cx="536.2" cy="297.9" rx="1.5" ry="1.1" fill="#735236"/>
<ellipse cx="544.5" cy="292.2" rx="1.5" ry="1.1" fill="#735236"/>
<ellipse cx="552.9" cy="286.5" rx="1.5" ry="1.1" fill="#735236"/>
<ellipse cx="561.3" cy="280.8" rx="1.5" ry="1.1" fill="#735236"/>
<ellipse cx="569.7" cy="275.2" rx="1.5" ry="1.1" fill="#735236"/>
<ellipse cx="578.1" cy="269.5" rx="1.5" ry="1.1" fill="#735236"/>
<ellipse cx="586.5" cy="263.8" rx="1.5" ry="1.1" fill="#735236"/>
<ellipse cx="594.8" cy="258.1" rx="1.5" ry="1.1" fill="#735236"/>
<ellipse cx="603.2" cy="252.4" rx="1.5" ry="1.1" fill="#735236"/>
<ellipse cx="611.6" cy="246.7" rx="1.5" ry="1.1" fill="#735236"/>
<path d="M492.0 275.7L495.6 275.7L495.6 285.7L492.0 285.7z" fill="#a88460" fill-opacity="0.6"/>
<ellipse cx="493.8" cy="275.7" rx="1.9" ry="1.3" fill="#6e4d30"/>
<path d="M498.2 271.3L501.8 271.3L501.8 281.3L498.2 281.3z" fill="#a88460" fill-opacity="0.6"/>
<ellipse cx="500" cy="271.3" rx="1.9" ry="1.3" fill="#6e4d30"/>
<path d="M504.6 266.8L508.2 266.8L508.2 276.8L504.6 276.8z" fill="#a88460" fill-opacity="0.6"/>
<ellipse cx="506.4" cy="266.8" rx="1.9" ry="1.3" fill="#6e4d30"/>
<path d="M513.7 276.3L517.3 276.3L517.3 286.3L513.7 286.3z" fill="#a88460" fill-opacity="0.6"/>
<ellipse cx="515.5" cy="276.3" rx="1.9" ry="1.3" fill="#6e4d30"/>
<path d="M519.7 272.0L523.3 272.0L523.3 282.0L519.7 282.0z" fill="#a88460" fill-opacity="0.6"/>
<ellipse cx="521.5" cy="272" rx="1.9" ry="1.3" fill="#6e4d30"/>
<path d="M507.1 280.8L510.7 280.8L510.7 290.8L507.1 290.8z" fill="#a88460" fill-opacity="0.6"/>
<ellipse cx="508.9" cy="280.8" rx="1.9" ry="1.3" fill="#6e4d30"/>
<rect x="519.5" y="283" width="3.5" height="5" fill="#7ab8c8" stroke="#2a4a50" stroke-width="0.5"/>
<path d="M470.0 290.0L500.0 272.0L530.0 282.0L500.0 300.0z" fill="#c8b89a" fill-opacity="0.3"/>
<path d="M427.0 288.0L511.0 315.0L620.0 241.0" fill="none" stroke="#5e6064" stroke-width="1.0"/>
<path d="M427.0 288.0L535.5 214.5L620.0 241.0" fill="none" stroke="#6e7176" stroke-width="0.9"/>
<path d="M429.0 291.0L537.0 217.5" fill="none" stroke="#e8e8e8" stroke-width="0.6" stroke-dasharray="1.5 1.5"/>
<path d="M427.0 288.0L427.0 353.5L511.0 380.5L620.0 306.5" fill="none" stroke="#6f7276" stroke-width="0.8"/>
<path d="M511.0 315.0L511.0 380.5" fill="none" stroke="#6f7276" stroke-width="0.8"/>
<path d="M420.0 352.0L432.0 351.0L434.0 356.0L422.0 357.0z" fill="#9fb0c8" fill-opacity="0.6"/>
<path d="M798.5 194.0L876.5 224.0L876.5 324.0L798.5 294.0z" fill="#d9d3cb"/>
<path d="M876.5 224.0L911.5 197.0L911.5 292.0L876.5 319.0z" fill="#d5d0c8"/>
<path d="M798.5 199.0L815.7 205.6L815.7 300.6L798.5 294.0z" fill="#d4d6d6"/>
<path d="M798.5 216.0L815.7 222.6" fill="none" stroke="#aab4b4" stroke-width="0.6"/>
<path d="M798.5 232.0L815.7 238.6" fill="none" stroke="#aab4b4" stroke-width="0.6"/>
<path d="M798.5 248.0L815.7 254.6" fill="none" stroke="#aab4b4" stroke-width="0.6"/>
<path d="M798.5 264.0L815.7 270.6" fill="none" stroke="#aab4b4" stroke-width="0.6"/>
<path d="M798.5 280.0L815.7 286.6" fill="none" stroke="#aab4b4" stroke-width="0.6"/>
<rect x="811.5" y="211" width="2" height="5" fill="#7a8a80"/><rect x="811.5" y="228" width="2" height="5" fill="#7a8a80"/>
<path d="M815.8 208.7L820.5 210.5L820.5 302.5L815.8 300.7z" fill="#c8a582" fill-opacity="0.85"/>
<path d="M835.6 216.3L840.3 218.1L840.3 310.1L835.6 308.3z" fill="#c8a582" fill-opacity="0.85"/>
<path d="M873.4 230.8L876.5 232.0L876.5 324.0L873.4 322.8z" fill="#c8a582" fill-opacity="0.7"/>
<path d="M798.5 207.0L876.5 237.0" fill="none" stroke="#b9b6b0" stroke-width="0.8"/>
<path d="M876.5 241.1L911.5 204.6" fill="none" stroke="#c0bdb8" stroke-width="0.7"/>
<path d="M798.5 223.2L876.5 253.2" fill="none" stroke="#b9b6b0" stroke-width="0.8"/>
<path d="M876.5 256.5L911.5 220.0" fill="none" stroke="#c0bdb8" stroke-width="0.7"/>
<path d="M798.5 239.4L876.5 269.4" fill="none" stroke="#b9b6b0" stroke-width="0.8"/>
<path d="M876.5 271.9L911.5 235.4" fill="none" stroke="#c0bdb8" stroke-width="0.7"/>
<path d="M798.5 255.6L876.5 285.6" fill="none" stroke="#b9b6b0" stroke-width="0.8"/>
<path d="M876.5 287.3L911.5 250.8" fill="none" stroke="#c0bdb8" stroke-width="0.7"/>
<path d="M798.5 271.8L876.5 301.8" fill="none" stroke="#b9b6b0" stroke-width="0.8"/>
<path d="M876.5 302.7L911.5 266.2" fill="none" stroke="#c0bdb8" stroke-width="0.7"/>
<path d="M798.5 288.0L876.5 318.0" fill="none" stroke="#b9b6b0" stroke-width="0.8"/>
<path d="M876.5 318.1L911.5 281.6" fill="none" stroke="#c0bdb8" stroke-width="0.7"/>
<path d="M821.5 215.0L833.7 219.7L833.7 228.7L821.5 224.0z" fill="#d6d0c4" stroke="#3f4246" stroke-width="0.9"/>
<path d="M823.8 222.9L832.1 222.1" fill="none" stroke="#cfb040" stroke-width="2.0" stroke-opacity="0.85"/>
<path d="M821.5 231.2L833.7 235.9L833.7 244.9L821.5 240.2z" fill="#d6d0c4" stroke="#3f4246" stroke-width="0.9"/>
<path d="M823.8 239.1L832.1 238.3" fill="none" stroke="#cfb040" stroke-width="2.0" stroke-opacity="0.85"/>
<path d="M821.5 247.4L833.7 252.1L833.7 261.1L821.5 256.4z" fill="#d6d0c4" stroke="#3f4246" stroke-width="0.9"/>
<path d="M823.8 255.3L832.1 254.5" fill="none" stroke="#cfb040" stroke-width="2.0" stroke-opacity="0.85"/>
<path d="M821.5 263.6L833.7 268.3L833.7 277.3L821.5 272.6z" fill="#d6d0c4" stroke="#3f4246" stroke-width="0.9"/>
<path d="M823.8 271.5L832.1 270.7" fill="none" stroke="#cfb040" stroke-width="2.0" stroke-opacity="0.85"/>
<path d="M821.5 279.8L833.7 284.5L833.7 293.5L821.5 288.8z" fill="#d6d0c4" stroke="#3f4246" stroke-width="0.9"/>
<path d="M823.8 287.7L832.1 286.9" fill="none" stroke="#cfb040" stroke-width="2.0" stroke-opacity="0.85"/>
<path d="M839.8 222.0L851.7 226.6L851.7 235.6L839.8 231.0z" fill="#d6d0c4" stroke="#3f4246" stroke-width="0.9"/>
<path d="M842.1 229.9L850.1 229.0" fill="none" stroke="#cfb040" stroke-width="2.0" stroke-opacity="0.85"/>
<path d="M839.8 238.2L851.7 242.8L851.7 251.8L839.8 247.2z" fill="#d6d0c4" stroke="#3f4246" stroke-width="0.9"/>
<path d="M842.1 246.1L850.1 245.2" fill="none" stroke="#cfb040" stroke-width="2.0" stroke-opacity="0.85"/>
<path d="M839.8 254.4L851.7 259.0L851.7 268.0L839.8 263.4z" fill="#d6d0c4" stroke="#3f4246" stroke-width="0.9"/>
<path d="M842.1 262.3L850.1 261.4" fill="none" stroke="#cfb040" stroke-width="2.0" stroke-opacity="0.85"/>
<path d="M839.8 270.6L851.7 275.2L851.7 284.2L839.8 279.6z" fill="#d6d0c4" stroke="#3f4246" stroke-width="0.9"/>
<path d="M842.1 278.5L850.1 277.6" fill="none" stroke="#cfb040" stroke-width="2.0" stroke-opacity="0.85"/>
<path d="M839.8 286.8L851.7 291.4L851.7 300.4L839.8 295.8z" fill="#d6d0c4" stroke="#3f4246" stroke-width="0.9"/>
<path d="M842.1 294.7L850.1 293.8" fill="none" stroke="#cfb040" stroke-width="2.0" stroke-opacity="0.85"/>
<path d="M857.4 228.8L869.7 233.5L869.7 242.5L857.4 237.8z" fill="#d6d0c4" stroke="#3f4246" stroke-width="0.9"/>
<path d="M859.7 236.7L868.1 235.9" fill="none" stroke="#cfb040" stroke-width="2.0" stroke-opacity="0.85"/>
<path d="M857.4 245.0L869.7 249.7L869.7 258.7L857.4 254.0z" fill="#d6d0c4" stroke="#3f4246" stroke-width="0.9"/>
<path d="M859.7 252.9L868.1 252.1" fill="none" stroke="#cfb040" stroke-width="2.0" stroke-opacity="0.85"/>
<path d="M857.4 261.2L869.7 265.9L869.7 274.9L857.4 270.2z" fill="#d6d0c4" stroke="#3f4246" stroke-width="0.9"/>
<path d="M859.7 269.1L868.1 268.3" fill="none" stroke="#cfb040" stroke-width="2.0" stroke-opacity="0.85"/>
<path d="M857.4 277.4L869.7 282.1L869.7 291.1L857.4 286.4z" fill="#d6d0c4" stroke="#3f4246" stroke-width="0.9"/>
<path d="M859.7 285.3L868.1 284.5" fill="none" stroke="#cfb040" stroke-width="2.0" stroke-opacity="0.85"/>
<path d="M857.4 293.6L869.7 298.3L869.7 307.3L857.4 302.6z" fill="#d6d0c4" stroke="#3f4246" stroke-width="0.9"/>
<path d="M859.7 301.5L868.1 300.7" fill="none" stroke="#cfb040" stroke-width="2.0" stroke-opacity="0.85"/>
<path d="M876.5 224.0L881.8 219.9L881.8 314.9L876.5 319.0z" fill="#d6d0c6"/>
<path d="M893.0 216.1L895.0 214.4L895.0 304.7L893.0 306.3z" fill="#eeeeec" fill-opacity="0.8"/>
<path d="M895.8 213.9L899.2 211.2L899.2 301.4L895.8 304.1z" fill="#cfae8a" fill-opacity="0.75"/>
<path d="M897.0 221.0L903.0 217.0L908.0 218.0L902.0 222.0z" fill="#d4b030" fill-opacity="0.85"/>
<path d="M895.0 225.0L910.0 220.0" fill="none" stroke="#c8d0d0" stroke-width="0.7"/>
<path d="M897.0 238.0L903.0 234.0L908.0 235.0L902.0 239.0z" fill="#d4b030" fill-opacity="0.85"/>
<path d="M895.0 242.0L910.0 237.0" fill="none" stroke="#c8d0d0" stroke-width="0.7"/>
<path d="M897.0 255.0L903.0 251.0L908.0 252.0L902.0 256.0z" fill="#d4b030" fill-opacity="0.85"/>
<path d="M895.0 259.0L910.0 254.0" fill="none" stroke="#c8d0d0" stroke-width="0.7"/>
<path d="M897.0 272.0L903.0 268.0L908.0 269.0L902.0 273.0z" fill="#d4b030" fill-opacity="0.85"/>
<path d="M895.0 276.0L910.0 271.0" fill="none" stroke="#c8d0d0" stroke-width="0.7"/>
<path d="M869.0 240.0L877.0 241.5L902.0 225.5L905.0 221.0L905.0 231.0L877.0 248.0L869.0 248.0z" fill="#4d565c" stroke="#3a4046" stroke-width="0.6"/>
<path d="M878.0 245.0L903.0 229.0" fill="none" stroke="#7a8288" stroke-width="0.5"/>
<path d="M871.0 244.0L876.0 244.5" fill="none" stroke="#7a8288" stroke-width="0.5"/>
<path d="M869.0 257.0L877.0 258.5L902.0 242.5L905.0 238.0L905.0 248.0L877.0 265.0L869.0 265.0z" fill="#4d565c" stroke="#3a4046" stroke-width="0.6"/>
<path d="M878.0 262.0L903.0 246.0" fill="none" stroke="#7a8288" stroke-width="0.5"/>
<path d="M871.0 261.0L876.0 261.5" fill="none" stroke="#7a8288" stroke-width="0.5"/>
<path d="M869.0 274.0L877.0 275.5L902.0 259.5L905.0 255.0L905.0 265.0L877.0 282.0L869.0 282.0z" fill="#4d565c" stroke="#3a4046" stroke-width="0.6"/>
<path d="M878.0 279.0L903.0 263.0" fill="none" stroke="#7a8288" stroke-width="0.5"/>
<path d="M871.0 278.0L876.0 278.5" fill="none" stroke="#7a8288" stroke-width="0.5"/>
<path d="M798.5 194.0L832.0 171.0L911.5 197.0L876.5 219.5z" fill="#dedcd8"/>
<path d="M803.0 193.5L832.0 175.0L906.0 198.0L876.0 216.5z" fill="#c2bfba"/>
<path d="M876.5 219.5L911.5 197.0L911.5 201.0L876.5 224.0z" fill="#d2d0cc"/>
<path d="M798.5 194.0L876.5 219.5L876.5 224.0L798.5 198.0z" fill="#d6d4d0"/>
<path d="M818.0 179.5L881.0 195.4L881.0 203.3L818.0 191.4z" fill="#667882" stroke="#3d4a52" stroke-width="0.7"/>
<path d="M818.0 179.5L881.0 195.4L879.0 198.0L816.0 182.5z" fill="#7d8e97"/>
<path d="M810.0 182.0L816.0 181.0L816.0 197.0L810.0 198.0z" fill="#f2f2f2" stroke="#888" stroke-width="0.5"/>
<path d="M843.0 194.0L844.8 194.0L844.8 207.0L843.0 207.0z" fill="#7a5535"/>
<path d="M851.0 196.0L852.8 196.0L852.8 209.0L851.0 209.0z" fill="#7a5535"/>
<path d="M864.0 199.2L865.8 199.2L865.8 212.2L864.0 212.2z" fill="#7a5535"/>
<path d="M872.0 201.2L873.8 201.2L873.8 214.2L872.0 214.2z" fill="#7a5535"/>
<path d="M825.7 191.4L836.0 193.5L836.0 199.3L825.7 197.2z" fill="#5aa8c0" fill-opacity="0.85"/>
<path d="M798.5 194.0L876.5 219.5L911.5 197.0L832.0 171.0L798.5 194.0" fill="none" stroke="#5e6266" stroke-width="0.9"/>
<path d="M876.5 219.5L876.5 290.0" fill="none" stroke="#6e7276" stroke-width="0.8"/>
<path d="M911.5 197.0L911.5 292.0" fill="none" stroke="#6e7276" stroke-width="0.8"/>
<path d="M798.5 194.0L798.5 300.0" fill="none" stroke="#6e7276" stroke-width="0.8"/>
<path d="M812.0 276.8L862.9 290.4L904.5 279.3L817.1 334.5L812.0 337.1z" fill="#c3c8ca"/>
<path d="M812.0 276.8L862.9 290.4L904.5 279.3L817.1 334.5L812.0 337.1z" fill="#b5bdbf" fill-opacity="0.6"/>
<path d="M812.0 295.5L862.9 292.1" fill="none" stroke="#d8dcdc" stroke-width="0.6"/>
<path d="M812.0 307.4L861.2 304.0" fill="none" stroke="#d8dcdc" stroke-width="0.6"/>
<path d="M812.0 319.2L859.5 315.8" fill="none" stroke="#d8dcdc" stroke-width="0.6"/>
<path d="M822.2 290.4L812.0 334.5" fill="none" stroke="#9aa4a8" stroke-width="0.5"/>
<path d="M834.1 292.1L822.2 327.7" fill="none" stroke="#9aa4a8" stroke-width="0.5"/>
<path d="M846.0 293.8L832.4 320.9" fill="none" stroke="#9aa4a8" stroke-width="0.5"/>
<path d="M857.8 295.5L842.6 314.1" fill="none" stroke="#9aa4a8" stroke-width="0.5"/>
<path d="M812.0 298.9L829.0 303.1L829.0 306.5L812.0 315.0z" fill="#e8e8e6" stroke="#666" stroke-width="0.5"/>
<ellipse cx="829.0" cy="309.9" rx="1.3" ry="0.9" fill="#8a6440"/>
<ellipse cx="839.2" cy="320.1" rx="1.3" ry="0.9" fill="#8a6440"/>
<ellipse cx="851.0" cy="310.7" rx="1.3" ry="0.9" fill="#8a6440"/>
<ellipse cx="859.5" cy="305.7" rx="1.3" ry="0.9" fill="#8a6440"/>
<ellipse cx="866.3" cy="300.6" rx="1.3" ry="0.9" fill="#8a6440"/>
<ellipse cx="832.4" cy="323.5" rx="1.3" ry="0.9" fill="#8a6440"/>
<path d="M817.1 334.5L904.5 279.3L907.1 282.7L817.1 339.6z" fill="#dcdcda" stroke="#6a6e72" stroke-width="0.6"/>
<rect x="823.4" y="330.9" width="2" height="1.5" fill="#8a6440"/>
<rect x="830.7" y="326.3" width="2" height="1.5" fill="#8a6440"/>
<rect x="838.0" y="321.7" width="2" height="1.5" fill="#8a6440"/>
<rect x="845.2" y="317.1" width="2" height="1.5" fill="#8a6440"/>
<rect x="852.5" y="312.5" width="2" height="1.5" fill="#8a6440"/>
<rect x="859.8" y="307.9" width="2" height="1.5" fill="#8a6440"/>
<rect x="867.1" y="303.3" width="2" height="1.5" fill="#8a6440"/>
<rect x="874.4" y="298.7" width="2" height="1.5" fill="#8a6440"/>
<rect x="881.7" y="294.1" width="2" height="1.5" fill="#8a6440"/>
<rect x="889.0" y="289.5" width="2" height="1.5" fill="#8a6440"/>
<rect x="896.2" y="284.9" width="2" height="1.5" fill="#8a6440"/>
<path d="M817.1 339.6L907.1 282.7L908.8 293.8L917.3 295.5L919.0 309.0L871.4 349.8L817.1 353.2z" fill="#cbcbc9"/>
<path d="M817.1 345.0L820.6 343.0L820.6 350.0L817.1 352.0z" fill="#f6f6f6" stroke="#50555a" stroke-width="0.6"/>
<path d="M821.6 342.0L823.1 341.0L823.1 352.0L821.6 353.0z" fill="#c09870" fill-opacity="0.8"/>
<path d="M825.2 339.9L828.7 337.9L828.7 344.9L825.2 346.9z" fill="#f6f6f6" stroke="#50555a" stroke-width="0.6"/>
<path d="M829.7 336.9L831.2 335.9L831.2 346.9L829.7 347.9z" fill="#c09870" fill-opacity="0.8"/>
<path d="M833.4 334.8L836.9 332.8L836.9 339.8L833.4 341.8z" fill="#f6f6f6" stroke="#50555a" stroke-width="0.6"/>
<path d="M837.9 331.8L839.4 330.8L839.4 341.8L837.9 342.8z" fill="#c09870" fill-opacity="0.8"/>
<path d="M841.5 329.7L845.0 327.7L845.0 334.7L841.5 336.7z" fill="#f6f6f6" stroke="#50555a" stroke-width="0.6"/>
<path d="M846.0 326.7L847.5 325.7L847.5 336.7L846.0 337.7z" fill="#c09870" fill-opacity="0.8"/>
<path d="M849.7 324.6L853.2 322.6L853.2 329.6L849.7 331.6z" fill="#f6f6f6" stroke="#50555a" stroke-width="0.6"/>
<path d="M854.2 321.6L855.7 320.6L855.7 331.6L854.2 332.6z" fill="#c09870" fill-opacity="0.8"/>
<path d="M857.8 319.5L861.3 317.5L861.3 324.5L857.8 326.5z" fill="#f6f6f6" stroke="#50555a" stroke-width="0.6"/>
<path d="M862.3 316.5L863.8 315.5L863.8 326.5L862.3 327.5z" fill="#c09870" fill-opacity="0.8"/>
<path d="M866.0 314.4L869.5 312.4L869.5 319.4L866.0 321.4z" fill="#f6f6f6" stroke="#50555a" stroke-width="0.6"/>
<path d="M870.5 311.4L872.0 310.4L872.0 321.4L870.5 322.4z" fill="#c09870" fill-opacity="0.8"/>
<path d="M874.1 309.4L877.6 307.4L877.6 314.4L874.1 316.4z" fill="#f6f6f6" stroke="#50555a" stroke-width="0.6"/>
<path d="M878.6 306.4L880.1 305.4L880.1 316.4L878.6 317.4z" fill="#c09870" fill-opacity="0.8"/>
<path d="M882.3 304.3L885.8 302.3L885.8 309.3L882.3 311.3z" fill="#f6f6f6" stroke="#50555a" stroke-width="0.6"/>
<path d="M886.8 301.3L888.3 300.3L888.3 311.3L886.8 312.3z" fill="#c09870" fill-opacity="0.8"/>
<path d="M890.4 299.2L893.9 297.2L893.9 304.2L890.4 306.2z" fill="#f6f6f6" stroke="#50555a" stroke-width="0.6"/>
<path d="M894.9 296.2L896.4 295.2L896.4 306.2L894.9 307.2z" fill="#c09870" fill-opacity="0.8"/>
<path d="M817.1 344.7L846.0 334.5L849.4 344.7L817.1 353.2z" fill="#f0f0f0"/>
<path d="M907.1 290.4L919.0 295.5L919.0 309.0L908.8 312.4z" fill="#eeeeee" stroke="#666" stroke-width="0.5"/>
<path d="M845.1 328.6L907.1 295.5L918.1 298.0L861.2 331.1z" fill="#aebcc4" stroke="#4a5257" stroke-width="0.7"/>
<path d="M861.2 331.1L918.1 298.0L919.0 304.0L862.9 337.1z" fill="#dfe3e5" stroke="#5a6066" stroke-width="0.6"/>
<path d="M845.1 328.6L861.2 331.1L862.9 337.1L846.0 334.5z" fill="#c8ced2" stroke="#5a6066" stroke-width="0.6"/>
<path d="M879.9 327.7L882.1 326.7L882.1 340.7L879.9 341.7z" fill="#b08a62"/>
<path d="M890.9 320.9L893.1 319.9L893.1 333.9L890.9 334.9z" fill="#b08a62"/>
<path d="M902.0 315.0L904.2 314.0L904.2 328.0L902.0 329.0z" fill="#b08a62"/>
<path d="M848.5 349.8L854.4 337.9L861.2 337.9L859.5 351.5z" fill="#8e9294" stroke="#555" stroke-width="0.6"/>
<path d="M812.0 355.8L817.3 351.9L839.7 402.0L839.7 464.0L812.0 456.1z" fill="#b4b3af" stroke="#4e5256" stroke-width="0.8"/>
<path d="M817.3 403.3L838.4 409.9" fill="none" stroke="#5f6468" stroke-width="0.8"/>
<path d="M817.3 420.5L838.4 427.1" fill="none" stroke="#5f6468" stroke-width="0.8"/>
<path d="M817.3 437.6L838.4 444.2" fill="none" stroke="#5f6468" stroke-width="0.8"/>
<path d="M817.3 435.0L830.5 437.6L830.5 441.6L817.3 438.2z" fill="#d4b030" fill-opacity="0.6"/>
<path d="M876.6 391.5L883.2 373.0L883.2 437.6L876.6 445.5z" fill="#b7b5b1" stroke="#5e6266" stroke-width="0.7"/>
<path d="M879.3 376.9L881.9 374.8L881.9 440.3L879.3 442.9z" fill="#a88058" fill-opacity="0.7"/>
<path d="M817.3 351.9L883.2 373.0L839.7 402.0L812.0 392.8L812.0 355.8z" fill="#9da1a0" stroke="#4a4f53" stroke-width="0.9"/>
<path d="M819.9 355.8L878.0 373.8L859.5 386.2L812.0 374.3z" fill="#a8acab" fill-opacity="0.8"/>
<path d="M812.0 376.9L859.5 388.8L883.2 373.0" fill="none" stroke="#c8cccc" stroke-width="0.7"/>
<ellipse cx="838.4" cy="359.8" rx="1.4" ry="1" fill="#8a6440"/>
<ellipse cx="859.5" cy="366.4" rx="1.4" ry="1" fill="#8a6440"/>
<ellipse cx="839.7" cy="380.9" rx="1.4" ry="1" fill="#8a6440"/>
<ellipse cx="819.9" cy="374.3" rx="1.4" ry="1" fill="#8a6440"/>
<ellipse cx="860.8" cy="387.5" rx="1.4" ry="1" fill="#8a6440"/>
<ellipse cx="819.9" cy="395.4" rx="1.4" ry="1" fill="#8a6440"/>
<path d="M839.7 402.0L876.6 391.5L876.6 464.0L854.2 469.3L839.7 464.0z" fill="#cfcdc9" stroke="#5e6266" stroke-width="0.8"/>
<path d="M839.7 402.0L854.2 406.0L854.2 469.3L839.7 464.0z" fill="#b8b6b2" stroke="#4e5256" stroke-width="0.8"/>
<path d="M854.2 406.0L876.6 391.5L876.6 464.0L854.2 469.3z" fill="#cfcdc9" stroke="#4e5256" stroke-width="0.8"/>
<path d="M839.7 402.0L876.6 391.5L879.3 392.8L854.2 406.0z" fill="#b9bcbb" stroke="#5e6266" stroke-width="0.6"/>
<path d="M866.1 400.7L875.3 397.5L875.3 406.0L866.1 409.1z" fill="#e6e6e4" stroke="#454a4e" stroke-width="0.8"/>
<path d="M866.1 419.2L875.3 416.0L875.3 424.4L866.1 427.6z" fill="#e6e6e4" stroke="#454a4e" stroke-width="0.8"/>
<path d="M866.1 437.6L875.3 434.5L875.3 442.9L866.1 446.1z" fill="#e6e6e4" stroke="#454a4e" stroke-width="0.8"/>
<path d="M855.5 421.8L875.3 416.5" fill="none" stroke="#c8d0d0" stroke-width="0.7"/>
<path d="M855.5 437.6L875.3 432.3" fill="none" stroke="#c8d0d0" stroke-width="0.7"/>
<path d="M855.5 453.5L875.3 448.2" fill="none" stroke="#c8d0d0" stroke-width="0.7"/>
<path d="M855.5 411.2L864.8 409.1L864.8 419.2L855.5 421.8z" fill="#d4b88a" fill-opacity="0.5"/>
<path d="M851.6 406.0L854.2 406.0L854.2 469.3L851.6 468.0z" fill="#a88058" fill-opacity="0.75"/>
<path d="M819.0 470.0L829.0 464.0" fill="none" stroke="#d8d6d2" stroke-width="2.6"/>
<path d="M819.0 471.5L829.0 465.5" fill="none" stroke="#7a7a7a" stroke-width="0.5"/>
<path d="M841.0 462.0L796.0 497.0" fill="none" stroke="#9090e0" stroke-width="0.5"/>
<path d="M382.0 486.5L382.0 465.0" fill="none" stroke="#18d018" stroke-width="1.4"/>
<path d="M379.3 466.5L384.7 466.5L382.0 458.5z" fill="#18d018"/>
<path d="M382.0 486.5L395.0 477.5" fill="none" stroke="#1414e0" stroke-width="1.4"/>
<path d="M393.0 474.5L396.5 480.0L400.0 474.0z" fill="#1414e0"/>
<path d="M382.0 486.5L401.0 492.0" fill="none" stroke="#c40000" stroke-width="1.4"/>
<path d="M400.0 488.5L399.5 495.0L408.0 494.0z" fill="#c40000"/>
<circle cx="796" cy="497" r="0.8" fill="#555"/>
</svg>
</div>
<!-- status bar -->
<div class="a" style="left:2px;top:513px;width:1019px;height:14px;background:#ebebeb"></div>
<div class="t" style="left:4px;top:515px">Select an option from the menu.</div>

<!-- dialog -->
<div class="a" style="left:575.5px;top:239px;width:241px;height:220px;background:#2a78cf"></div>
<div class="a" style="left:578px;top:255.7px;width:236px;height:201px;background:#f0f0f0"></div>
<div class="t" style="left:628.5px;top:242.5px;color:#fff;font-weight:bold;font-size:8.3px">New file combination</div>
<div class="a" style="left:771px;top:246px;width:6.5px;height:6.5px;border:1px solid #fff"></div>
<svg style="left:797.5px;top:246px" width="7" height="7"><path d="M0.3 0.3L6.3 6.3M6.3 0.3L0.3 6.3" stroke="#fff" stroke-width="1"/></svg>
<div class="t" style="left:583.5px;top:263.5px">Reference</div>
<div class="a" style="left:623.5px;top:261.5px;width:184.5px;height:15.5px;background:#fff;border:1px solid #dadada"></div>
<div class="t" style="left:627px;top:263px">New file combination</div>
<!-- tab control -->
<div class="a" style="left:582px;top:297.5px;width:228px;height:128px;background:#fff;border:1px solid #c9c9c9"></div>
<div class="a" style="left:701px;top:284px;width:67px;height:14px;background:#e3e3e3;border:1px solid #c4c4c4;border-bottom:none"></div>
<div class="a" style="left:582px;top:282.7px;width:119.5px;height:16px;background:#fff;border:1px solid #c9c9c9;border-bottom:none"></div>
<div class="t" style="left:584.5px;top:283.5px">Files to consider in the analysis</div>
<div class="t" style="left:702.5px;top:285.5px">Discarded clashes</div>
<!-- tree -->
<div class="a" style="left:584px;top:299px;width:225px;height:60.5px;background:#fff;border:1px solid #c8c8c8"></div>
<div class="a" style="left:628px;top:314px;width:74.5px;height:15px;background:#f0f0f0"></div>
<div class="t" style="left:603.5px;top:300.5px">Files</div>
<div class="t" style="left:629px;top:315px">Architectural Model</div>
<div class="t" style="left:629px;top:329.5px">Office Furniture</div>
<div class="t" style="left:629px;top:344px">HVAC Daikin Installation</div>
<svg style="left:584px;top:299px" width="226" height="62">
<path d="M10.5 10v48" stroke="#bbb" stroke-width="0.9" stroke-dasharray="0"/>
<path d="M10.5 22.5h8M10.5 37h8M10.5 51.5h8" stroke="#bbb" stroke-width="0.9"/>
<rect x="20.3" y="18.7" width="6.5" height="6.5" fill="#fff" stroke="#888" stroke-width="0.8"/>
<rect x="20.3" y="33.2" width="6.5" height="6.5" fill="#fff" stroke="#888" stroke-width="0.8"/>
<rect x="20.3" y="47.7" width="6.5" height="6.5" fill="#fff" stroke="#888" stroke-width="0.8"/>
<polygon points="34.60,28.40 29.40,25.40 29.40,19.40 34.60,16.40 39.80,19.40 39.80,25.40" fill="#3d68a8"/><g fill="none" stroke="#e8f0fa" stroke-width="0.6"><path d="M31.40 20.80L34.60 19.20L37.80 20.80V24.00L34.60 25.60L31.40 24.00Z M31.40 20.80L34.60 22.40L37.80 20.80M34.60 22.40V25.60"/></g><polygon points="34.60,43.00 29.40,40.00 29.40,34.00 34.60,31.00 39.80,34.00 39.80,40.00" fill="#3d68a8"/><g fill="none" stroke="#e8f0fa" stroke-width="0.6"><path d="M31.40 35.40L34.60 33.80L37.80 35.40V38.60L34.60 40.20L31.40 38.60Z M31.40 35.40L34.60 37.00L37.80 35.40M34.60 37.00V40.20"/></g><polygon points="34.60,57.60 29.40,54.60 29.40,48.60 34.60,45.60 39.80,48.60 39.80,54.60" fill="#3d68a8"/><g fill="none" stroke="#e8f0fa" stroke-width="0.6"><path d="M31.40 50.00L34.60 48.40L37.80 50.00V53.20L34.60 54.80L31.40 53.20Z M31.40 50.00L34.60 51.60L37.80 50.00M34.60 51.60V54.80"/></g>
<path d="M7.5 5.5a2.5 1.2 0 0 1 5 0v3a2.5 1.2 0 0 1-5 0z" fill="#d6e4f5" stroke="#3b6ab0" stroke-width="0.9"/><path d="M5 9.5a2.5 1.2 0 0 1 5 0v3a2.5 1.2 0 0 1-5 0z" fill="#d6e4f5" stroke="#3b6ab0" stroke-width="0.9"/>
<rect x="212" y="1" width="12.5" height="59" fill="#f4f4f4"/>
<path d="M215.5 8.5h5l-2.5-2.5z" fill="#555"/><path d="M215.5 52.5h5l-2.5 2.5z" fill="#555"/>
<rect x="213" y="14" width="10.5" height="11.5" rx="1" fill="#f0f0f0" stroke="#bdbdbd" stroke-width="0.8"/><path d="M215.5 17.3h5M215.5 19.8h5M215.5 22.3h5" stroke="#555" stroke-width="0.55"/>
<path d="M108 62.5h1M110 62.5h1M112 62.5h1M114 62.5h1" stroke="#777" stroke-width="0.8"/>
</svg>
<!-- category table -->
<div class="a" style="left:584.3px;top:364.3px;width:224px;height:59px;background:#fff;border:1px solid #c8c8c8"></div>
<div class="a" style="left:585.3px;top:365.3px;width:176px;height:15px;background:#efefef"></div>
<div class="a" style="left:761.3px;top:365.3px;width:34.5px;height:15px;background:#efefef;border-left:1px solid #e0e0e0"></div>
<div class="a" style="left:585.3px;top:380.3px;width:176px;height:11.5px;background:#c3c3c3"></div>
<div class="a" style="left:761.3px;top:380.3px;width:34.5px;height:11.5px;background:#cde6f8;border-left:1px solid #e0e0e0"></div>
<div class="a" style="left:761.3px;top:391.8px;width:1px;height:31px;background:#ececec"></div>
<div class="a" style="left:585.3px;top:404.3px;width:210px;height:1px;background:#efefef"></div>
<div class="a" style="left:585.3px;top:416.5px;width:210px;height:1px;background:#efefef"></div>
<div class="t" style="left:588px;top:367px">Category</div>
<div class="t" style="left:765px;top:367px">Include</div>
<div class="t" style="left:588px;top:379.5px">Columns</div>
<div class="t" style="left:588px;top:392px">Doors</div>
<div class="t" style="left:588px;top:404.2px">Floor slabs</div>
<div class="a" style="left:585.3px;top:417.5px;width:176px;height:5px;overflow:hidden"><div class="t" style="left:2.7px;top:-0.5px">Openings</div></div>
<svg style="left:584.3px;top:364.3px" width="225" height="60">
<g fill="#fff" stroke="#555" stroke-width="0.7"><rect x="191.5" y="17.5" width="6" height="6"/><rect x="191.5" y="30" width="6" height="6"/><rect x="191.5" y="42" width="6" height="6"/><rect x="191.5" y="54.5" width="6" height="6"/></g>
<g fill="none" stroke="#111" stroke-width="1"><path d="M192.5 20.5l1.5 1.7 3-4"/><path d="M192.5 33l1.5 1.7 3-4"/><path d="M192.5 45l1.5 1.7 3-4"/><path d="M192.5 57.5l1.5 1.7 3-4"/></g>
<rect x="211.5" y="1" width="12.5" height="57" fill="#f4f4f4"/>
<path d="M215 9.5h5l-2.5-2.5z" fill="#555"/><path d="M215 50h5l-2.5 2.5z" fill="#555"/>
<rect x="212.5" y="14" width="10.5" height="11" rx="1" fill="#f0f0f0" stroke="#bdbdbd" stroke-width="0.8"/><path d="M215 17h5M215 19.5h5M215 22h5" stroke="#555" stroke-width="0.55"/>
</svg>
<!-- buttons -->
<div class="a" style="left:582.3px;top:434px;width:48.5px;height:18.5px;background:linear-gradient(#e8f4fc,#cce6f7);border:1px solid #3c9be0;border-radius:1px"></div>
<div class="t c" style="left:582.3px;top:437px;width:48.5px">Accept</div>
<div class="a" style="left:769px;top:434px;width:40.5px;height:18.5px;background:linear-gradient(#f2f2f2,#e2e2e2);border:1px solid #adadad;border-radius:1px"></div>
<div class="t c" style="left:769px;top:437px;width:40.5px">Cancel</div>
</body></html>
